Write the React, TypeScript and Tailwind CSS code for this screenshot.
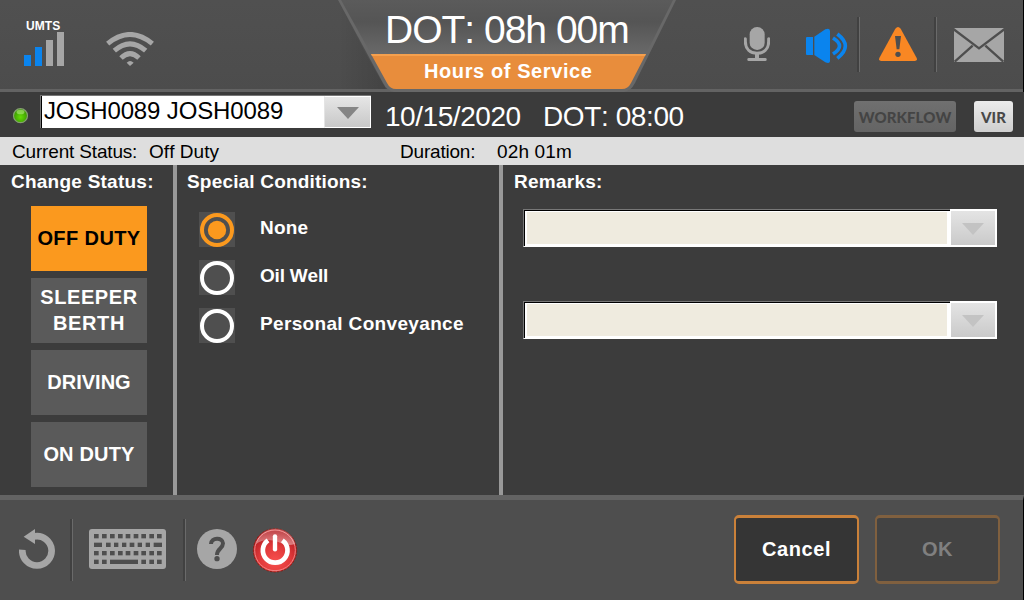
import React from "react";

const GRAY = "#a6a6a6";
const PANEL = "#4e4e4e";
const BLUE = "#0a84ee";

function SignalIcon() {
  return (
    <svg width="40" height="34" viewBox="0 0 40 34" shapeRendering="crispEdges">
      <rect x="0" y="23" width="7" height="11" fill={BLUE} />
      <rect x="11" y="15" width="7" height="19" fill={BLUE} />
      <rect x="22" y="8" width="7" height="26" fill={GRAY} />
      <rect x="33" y="0" width="7" height="34" fill={GRAY} />
    </svg>
  );
}

function WifiIcon() {
  return (
    <svg width="48" height="34" viewBox="318 96 144 102" fill="none" stroke={GRAY} strokeWidth="15">
      <path d="M323 131Q390 76 457 131" />
      <path d="M343 152Q390 111 437 152" />
      <path d="M363 174Q390 148 417 174" />
      <path d="M380 188Q390 178 401 188L390 198Z" fill={GRAY} stroke="none" />
    </svg>
  );
}

function MicIcon() {
  return (
    <svg width="26" height="34" viewBox="162 81 78 102" fill={GRAY}>
      <rect x="179" y="81" width="45" height="69" rx="22" />
      <path d="M166 116V124C166 149 182 160 201 160C220 160 236 149 236 124V116" fill="none" stroke={GRAY} strokeWidth="9" strokeLinecap="round" />
      <rect x="195" y="160" width="12" height="18" />
      <rect x="172" y="174" width="58" height="9" rx="4" />
    </svg>
  );
}

function SpeakerIcon() {
  return (
    <svg width="43" height="36" viewBox="345 84 129 108" fill={BLUE}>
      <path d="M351 111H369V165H351Q348 165 348 162V114Q348 111 351 111Z" />
      <path d="M373 110L406 88Q419 83 420 92V184Q419 192 406 187L373 165Z" />
      <path d="M429 114Q468 138 429 162M442 102Q490 138 442 175" fill="none" stroke={BLUE} strokeWidth="11" />
    </svg>
  );
}

function WarningIcon() {
  return (
    <svg width="38" height="34" viewBox="567 81 114 102">
      <path d="M616 86Q624 76 632 86L680 174Q683 183 674 183H574Q565 183 568 174Z" fill="#f98723" />
      <path d="M615 108H633L628 148H620Z" fill={PANEL} />
      <circle cx="624" cy="163" r="8" fill={PANEL} />
    </svg>
  );
}

function EnvelopeIcon() {
  return (
    <svg width="50" height="34" viewBox="792 84 150 102">
      <rect x="792" y="84" width="150" height="102" fill={GRAY} />
      <path d="M790 87L867 145L944 87M794 185L848 137M940 185L886 137" fill="none" stroke={PANEL} strokeWidth="7" />
    </svg>
  );
}

function UndoIcon() {
  return (
    <svg width="36" height="40" viewBox="57 147 108 120">
      <path d="M67 209A44 44 0 1 0 104 169" fill="none" stroke={GRAY} strokeWidth="20" />
      <path d="M71 170L105 147V192Z" fill={GRAY} />
    </svg>
  );
}

const KEY_ROWS: { y: number; keys: [number, number][] }[] = [
  { y: 162, keys: [[282, 14], [306, 14], [330, 14], [354, 14], [377, 14], [401, 14], [424, 14], [448, 14], [471, 14]] },
  { y: 188, keys: [[282, 24], [318, 14], [342, 13], [366, 13], [389, 14], [413, 13], [437, 13], [461, 25]] },
  { y: 213, keys: [[282, 14], [306, 14], [330, 14], [354, 14], [377, 14], [401, 14], [424, 14], [448, 14], [471, 14]] },
  { y: 239, keys: [[282, 14], [306, 14], [330, 84], [424, 14], [448, 14], [471, 14]] },
];

function KeyboardIcon() {
  return (
    <svg width="77" height="40" viewBox="267 147 231 120">
      <rect x="267" y="147" width="231" height="120" rx="9" fill={GRAY} />
      {KEY_ROWS.map((row) =>
        row.keys.map(([x, w]) => <rect key={`${row.y}-${x}`} x={x} y={row.y} width={w} height="13" fill={PANEL} />)
      )}
    </svg>
  );
}

function HelpIcon() {
  return (
    <svg width="40" height="40" viewBox="591 147 120 120">
      <circle cx="651" cy="207" r="60" fill={GRAY} />
      <path d="M633 192C633 171 669 171 669 190C669 206 651 205 651 225" fill="none" stroke={PANEL} strokeWidth="12" />
      <circle cx="651" cy="236" r="8" fill={PANEL} />
    </svg>
  );
}

function PowerIcon() {
  return (
    <svg width="46" height="46" viewBox="756 141 138 138">
      <defs>
        <radialGradient id="power" cx="0.5" cy="0.75" r="0.65">
          <stop offset="0" stopColor="#f8504e" />
          <stop offset="0.55" stopColor="#e0393a" />
          <stop offset="1" stopColor="#b71f24" />
        </radialGradient>
        <linearGradient id="gloss" x1="0" y1="0" x2="0" y2="1">
          <stop offset="0" stopColor="#ffffff" stopOpacity="0.15" />
          <stop offset="1" stopColor="#ffffff" stopOpacity="0.4" />
        </linearGradient>
      </defs>
      <circle cx="825" cy="211" r="65" fill="url(#power)" stroke="#8c1c14" strokeWidth="3" strokeDasharray="7 4" />
      <circle cx="825" cy="211" r="61" fill="none" stroke="#f08080" strokeWidth="3" />
      <path d="M768 192A60 60 0 0 1 885 192Q860 200 835 186Q795 172 768 192Z" fill="url(#gloss)" />
      <path d="M804 181A37 37 0 1 0 847 181" fill="none" stroke="#fff" strokeWidth="14" />
      <path d="M825 169V208" stroke="#fff" strokeWidth="13" strokeLinecap="round" />
    </svg>
  );
}

function Divider({ className }: { className: string }) {
  return <div className={`w-[3px] shrink-0 border-r border-[#6a6a6a] bg-[#414141] ${className}`} />;
}

function DownArrow({ fill }: { fill: string }) {
  return (
    <svg width="22" height="12" viewBox="0 0 22 12">
      <path d="M0 0H22L11 12Z" fill={fill} />
    </svg>
  );
}

function TitlePlate() {
  return (
    <div className="relative h-[92px] w-[340px] shrink-0">
      <svg className="absolute inset-0" width="340" height="92" viewBox="338 0 340 92">
        <defs>
          <linearGradient id="plate" x1="0" y1="0" x2="0" y2="1">
            <stop offset="0" stopColor="#5b5b5b" />
            <stop offset="0.4" stopColor="#555555" />
            <stop offset="1" stopColor="#696969" />
          </linearGradient>
          <linearGradient id="shadeLeft" x1="0" y1="0" x2="1" y2="0">
            <stop offset="0" stopColor="#000" stopOpacity="0" />
            <stop offset="1" stopColor="#000" stopOpacity="0.12" />
          </linearGradient>
        </defs>
        <path d="M338 0V89H386L366 54Z" fill="url(#shadeLeft)" />
        <path d="M338 0L383 83Q387 91 394 92H624Q631 91 635 83L676 0Z" fill="#686868" />
        <path d="M341 0L371 54H646L673 0Z" fill="url(#plate)" />
        <path d="M371 54L387 83Q390 89 396 89H622Q628 89 631 83L646 54Z" fill="#e88d3c" />
        <path d="M371 54H646L645 56H372Z" fill="#f5a04e" />
      </svg>
      <div className="relative flex h-full flex-col">
        <div className="mt-[9px] ml-[47px] text-[39px] leading-[41px] tracking-[-1px]">DOT: 08h 00m</div>
        <div className="mt-[11px] ml-[86px] text-[20px] leading-[20px] font-bold tracking-[0.6px]">Hours of Service</div>
      </div>
    </div>
  );
}

function RemarkSelect() {
  return (
    <div className="flex h-[38px] w-[474px]">
      <div className="flex-1 border-t border-l border-[#777] border-b border-b-white">
        <div className="h-full border-t border-l border-black">
          <div className="h-full border-2 border-t border-r-3 border-white bg-[#efebdf]" />
        </div>
      </div>
      <div className="flex w-[47px] items-center justify-center border-2 border-l border-white bg-linear-to-b from-[#e4e4e4] to-[#cacaca] pt-[1px]">
        <DownArrow fill="#c3c3c3" />
      </div>
    </div>
  );
}

function Radio({ label, selected, labelClass }: { label: string; selected?: boolean; labelClass: string }) {
  return (
    <div className="flex h-[35px] items-start">
      <div className="h-[35px] w-[36px] bg-[#4f4f4f]">
        <svg width="36" height="35" viewBox="0 0 36 35">
          <circle cx="18" cy="18" r="15" fill="none" stroke={selected ? "#fb991e" : "#fff"} strokeWidth="4" />
          {selected && <circle cx="18" cy="18" r="9.2" fill="#fb991e" />}
        </svg>
      </div>
      <div className={`mt-[6px] ml-[25px] text-[19px] leading-[19px] font-bold ${labelClass}`}>{label}</div>
    </div>
  );
}

function StatusButton({ children, className }: { children: React.ReactNode; className: string }) {
  return (
    <button className={`h-[65px] w-[116px] pb-[2px] text-center text-[20px] leading-[26px] font-bold whitespace-nowrap ${className}`}>
      {children}
    </button>
  );
}

export default function App() {
  return (
    <div className="flex h-[600px] w-[1024px] flex-col overflow-hidden bg-[#3c3c3c] font-['Liberation_Sans',Arial,sans-serif] whitespace-nowrap text-white [font-kerning:none]">
      <header className="h-[92px] shrink-0 border-r border-black bg-linear-to-b from-[#505050] to-[#4c4c4c]">
        <div className="flex h-full border-b-[3px] border-[#636363]">
          <div className="flex w-[338px] shrink-0">
            <div className="mt-[20px] ml-[24px] w-[40px]">
              <div className="h-[12px] pl-[2px] text-[12px] leading-[12px] font-bold tracking-[0.1px]">UMTS</div>
              <SignalIcon />
            </div>
            <div className="mt-[32px] ml-[42px]"><WifiIcon /></div>
          </div>
          <TitlePlate />
          <div className="flex flex-1">
            <div className="mt-[27px] ml-[66px]"><MicIcon /></div>
            <div className="mt-[28px] ml-[35px]"><SpeakerIcon /></div>
            <Divider className="mt-[17px] ml-[9px] h-[55px]" />
            <div className="mt-[27px] ml-[19px]"><WarningIcon /></div>
            <Divider className="mt-[17px] ml-[17px] h-[55px]" />
            <div className="mt-[28px] ml-[17px]"><EnvelopeIcon /></div>
          </div>
        </div>
      </header>

      <section className="flex h-[45px] shrink-0 bg-[#3b3b3b]">
        <svg className="mt-[15px] ml-[12px]" width="17" height="17" viewBox="0 0 17 17">
          <defs>
            <radialGradient id="led" cx="0.5" cy="0.6" r="0.5">
              <stop offset="0" stopColor="#66dc08" />
              <stop offset="1" stopColor="#3c9c00" />
            </radialGradient>
          </defs>
          <circle cx="8.5" cy="8.7" r="7" fill="url(#led)" stroke="#85a070" strokeWidth="1.2" />
          <ellipse cx="8.5" cy="5" rx="4" ry="2.3" fill="#b4ec80" opacity="0.6" />
        </svg>
        <div className="mt-[3px] ml-[11px] flex h-[33px] w-[331px] border-t border-l border-[#777]">
          <div className="flex-1 border-l border-black bg-white pt-[3px] pl-[2px] text-[24px] leading-[24px] tracking-[-0.14px] text-black">
            JOSH0089 JOSH0089
          </div>
          <div className="flex w-[47px] items-center justify-center border border-white border-l-[#e4e4e4] bg-linear-to-b from-[#e6e6e6] to-[#c8c8c8] pt-[1px] pl-[1px]">
            <DownArrow fill="#858585" />
          </div>
        </div>
        <div className="mt-[11px] ml-[14px] w-[158px] text-[28px] leading-[28px] tracking-[-0.45px]">10/15/2020</div>
        <div className="mt-[11px] w-[311px] text-[28px] leading-[28px] tracking-[-0.4px]">DOT: 08:00</div>
        <button className="mt-[9px] h-[31px] w-[102px] rounded-[3px] bg-linear-to-b from-[#707070] to-[#646464] font-['Lato',sans-serif] text-[15px] leading-[30px] font-black text-[#444]">
          WORKFLOW
        </button>
        <button className="mt-[9px] ml-[18px] h-[31px] w-[39px] rounded-[3px] bg-linear-to-b from-[#ececec] to-[#cfcfcf] font-['Lato',sans-serif] text-[15px] leading-[30px] font-black text-[#484848]">
          VIR
        </button>
      </section>

      <section className="flex h-[28px] shrink-0 bg-[#dedede] pt-[5px] pl-[12px] text-[19px] leading-[19px] text-black">
        <div className="w-[137px] tracking-[-0.17px]">Current Status:</div>
        <div className="w-[251px] tracking-[0.05px]">Off Duty</div>
        <div className="w-[97px] tracking-[-0.2px]">Duration:</div>
        <div className="tracking-[0.15px]">02h 01m</div>
      </section>

      <main className="flex h-[330px] shrink-0">
        <section className="w-[177px] shrink-0 border-r-4 border-[#999]">
          <h2 className="mt-[7px] ml-[11px] text-[19px] leading-[19px] font-bold tracking-[0.24px]">Change Status:</h2>
          <div className="mt-[15px] ml-[31px] flex flex-col gap-[7px]">
            <StatusButton className="bg-[#fb991e] tracking-[0.4px] text-black">OFF DUTY</StatusButton>
            <StatusButton className="bg-[#5a5a5a] tracking-[0.6px]">SLEEPER<br />BERTH</StatusButton>
            <StatusButton className="bg-[#5a5a5a]">DRIVING</StatusButton>
            <StatusButton className="bg-[#5a5a5a] tracking-[0.17px]">ON DUTY</StatusButton>
          </div>
        </section>
        <section className="w-[326px] shrink-0 border-r-4 border-[#999]">
          <h2 className="mt-[7px] ml-[10px] text-[19px] leading-[19px] font-bold tracking-[0.18px]">Special Conditions:</h2>
          <div className="mt-[21px] ml-[22px] flex flex-col gap-[13px]">
            <Radio label="None" selected labelClass="tracking-[0.2px]" />
            <Radio label="Oil Well" labelClass="tracking-[-0.2px]" />
            <Radio label="Personal Conveyance" labelClass="tracking-[0.34px]" />
          </div>
        </section>
        <section className="flex-1">
          <h2 className="mt-[7px] ml-[11px] text-[19px] leading-[19px] font-bold tracking-[0.25px]">Remarks:</h2>
          <div className="mt-[18px] ml-[20px] flex flex-col gap-[54px]">
            <RemarkSelect />
            <RemarkSelect />
          </div>
        </section>
      </main>

      <footer className="flex h-[105px] shrink-0 border-t-[5px] border-r border-t-[#636363] border-r-black bg-[#4e4e4e]">
        <div className="mt-[29px] ml-[19px]"><UndoIcon /></div>
        <Divider className="mt-[19px] ml-[15px] h-[62px]" />
        <div className="mt-[29px] ml-[16px]"><KeyboardIcon /></div>
        <Divider className="mt-[19px] ml-[17px] h-[62px]" />
        <div className="mt-[29px] ml-[11px]"><HelpIcon /></div>
        <div className="mt-[27px] ml-[15px] w-[46px]"><PowerIcon /></div>
        <button className="mt-[15px] ml-[436px] h-[69px] w-[125px] rounded-[5px] border-2 border-y-3 border-[#ca813a] bg-[#353535] pb-[2px] text-[20px] leading-[20px] font-bold tracking-[0.6px]">
          Cancel
        </button>
        <button className="mt-[15px] ml-[16px] h-[69px] w-[125px] rounded-[5px] border-2 border-y-3 border-[#80603f] bg-[#434343] pb-[2px] text-[20px] leading-[20px] font-bold tracking-[0.6px] text-[#808080]">
          OK
        </button>
      </footer>
    </div>
  );
}
